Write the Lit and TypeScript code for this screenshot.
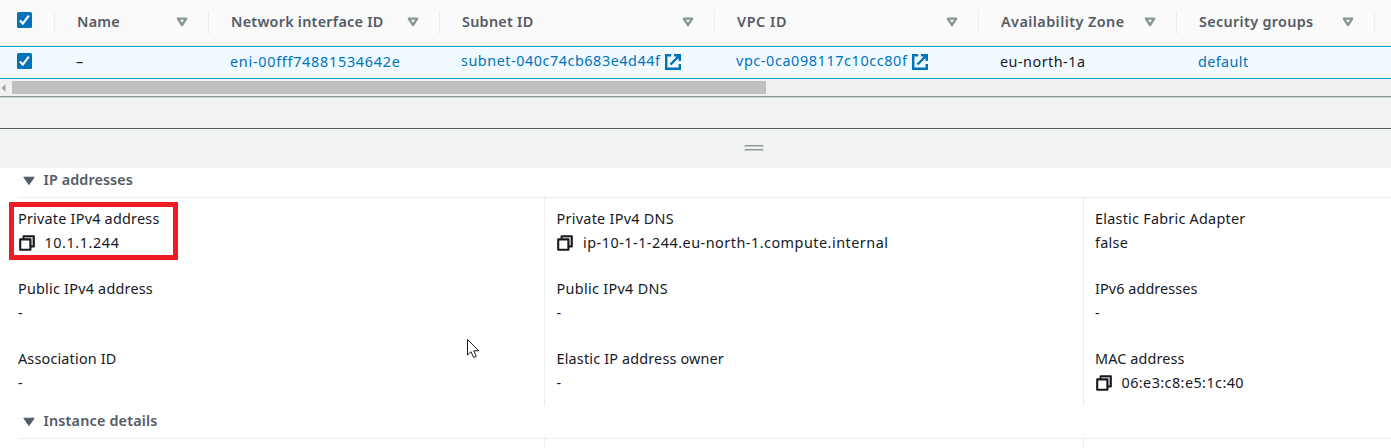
import { LitElement, html, css, nothing } from "lit";
import { customElement, property } from "lit/decorators.js";

/** One line of text tracked out to a fixed measure. */
@customElement("set-text")
class SetText extends LitElement {
  @property() text = "";
  @property({ type: Number }) measure = 0;
  static styles = css`
    :host { display: block; white-space: nowrap; flex: none; }
    .line { display: inline-block; }
  `;
  render() {
    return html`<span class="line">${this.text}</span>`;
  }
  updated() {
    const line = this.renderRoot.querySelector(".line") as HTMLElement;
    line.style.letterSpacing = "0px";
    const natural = line.getBoundingClientRect().width;
    if (this.measure && this.text.length > 1) {
      line.style.letterSpacing = `${(this.measure - natural) / this.text.length}px`;
    }
  }
}

type Item = { label: string; lw: number; value: string; vw: number; copy?: boolean; marked?: boolean };

const columns = [
  { title: "Name", w: 43, width: 154, value: "–", vw: 0 },
  { title: "Network interface ID", w: 152.5, width: 231, value: "eni-00fff74881534642e", vw: 170.5, link: true },
  { title: "Subnet ID", w: 71.5, width: 275, value: "subnet-040c74cb683e4d44f", vw: 199.5, link: true, external: true },
  { title: "VPC ID", w: 50, width: 264, value: "vpc-0ca098117c10cc80f", vw: 171.5, link: true, external: true },
  { title: "Availability Zone", w: 123.5, width: 198, value: "eu-north-1a", vw: 85.5 },
  { title: "Security groups", w: 114.5, width: 198, value: "default", vw: 50.5, link: true },
];

const groups: Item[][] = [
  [
    { label: "Private IPv4 address", lw: 141.5, value: "10.1.1.244", vw: 75, copy: true, marked: true },
    { label: "Public IPv4 address", lw: 135, value: "-", vw: 0 },
    { label: "Association ID", lw: 98.5, value: "-", vw: 0 },
  ],
  [
    { label: "Private IPv4 DNS", lw: 117.5, value: "ip-10-1-1-244.eu-north-1.compute.internal", vw: 305.5, copy: true },
    { label: "Public IPv4 DNS", lw: 111.5, value: "-", vw: 0 },
    { label: "Elastic IP address owner", lw: 167.5, value: "-", vw: 0 },
  ],
  [
    { label: "Elastic Fabric Adapter", lw: 150.5, value: "false", vw: 33 },
    { label: "IPv6 addresses", lw: 102.5, value: "-", vw: 0 },
    { label: "MAC address", lw: 89.5, value: "06:e3:c8:e5:1c:40", vw: 122.5, copy: true },
  ],
];

const check = html`<svg class="check" width="15" height="16" viewBox="0 0 15 16">
  <rect width="15" height="16" rx="1.5" fill="#0073bb" />
  <path d="M2.9 8.6 5.8 11.6 11.8 3.6" fill="none" stroke="#fff" stroke-width="2.2" />
</svg>`;
const sort = html`<svg class="sort" width="12" height="10" viewBox="0 0 12 10">
  <path d="M1.8 1.6H10.2L6 8Z" fill="none" stroke="#879596" stroke-width="2.3" stroke-linejoin="round" />
</svg>`;
const external = html`<svg class="external" width="16" height="16" viewBox="0 0 16 16" fill="none" stroke="#0073bb" stroke-width="2.4">
  <path d="M6.2 1.2H1.2V14.8H14.8V10M9 1.2H14.8V7M14.6 1.4 5.5 10.5" />
</svg>`;
const copy = html`<svg class="copy" width="16" height="16" viewBox="0 0 16 16" fill="none" stroke="#16191f" stroke-width="2.1" stroke-linejoin="round">
  <path d="M4.6 4V1.2H14.8V11.4H12" /><path d="M5.5 2.7H13.3V10.5" stroke="#a2a3a5" stroke-width="1" /><rect x="1.2" y="4.4" width="10.2" height="10.4" />
</svg>`;
const caret = html`<svg class="caret" width="12" height="10" viewBox="0 0 12 10">
  <path d="M.8 1.2H11.2L6 8.6Z" fill="#545b64" stroke="#545b64" stroke-width="1" stroke-linejoin="round" />
</svg>`;

@customElement("app-root")
class AppRoot extends LitElement {
  static styles = css`
    :host {
      display: block; position: relative; width: 1391px; height: 448px; overflow: hidden;
      background: #fff; color: #16191f;
      font: 14.4px/24px "Noto Sans", sans-serif;
    }
    svg { display: block; flex: none; }
    .row { display: flex; box-sizing: border-box; }
    .head { height: 46px; background: #fafafa; border-bottom: 1px solid #eaeded; color: #545b64; font-weight: 600; padding-top: 11px; }
    .body { height: 33px; background: #f1faff; border: solid #00a1c9; border-width: 1px 0; }
    .pick { width: 55px; box-sizing: border-box; flex: none; padding-left: 17px; }
    .head .pick { border-right: 1px solid #eaeded; height: 23px; padding-top: 1px; }
    .body .pick { padding-top: 6px; }
    .cell { box-sizing: border-box; flex: none; display: flex; padding-left: 21px; }
    .head .cell { height: 23px; border-right: 1px solid #eaeded; padding: 0 20.5px 0 22px; justify-content: space-between; line-height: 22px; }
    .sort { margin-top: 6px; }
    .body .cell { padding-top: 3px; }
    .body .cell.ext { padding-top: 2px; }
    .link { color: #0073bb; }
    .external { margin: 5px 0 0 4.5px; }
    .scroll { height: 17px; background: #f1f1f1; display: flex; padding-top: 2px; box-sizing: border-box; }
    .scroll svg { margin: 3px 6px 0 1px; }
    .thumb { width: 754px; height: 13px; background: #c1c1c1; }
    .gap { height: 33px; box-sizing: border-box; background: #f2f3f3; border-top: 1px solid #879596; border-bottom: 1px solid #545b64; box-shadow: inset 0 1px #cfd4d4; }
    .grip { height: 39px; background: #f2f3f3; display: flex; justify-content: center; padding: 16px 0 0 117px; box-sizing: border-box; }
    .title { height: 30px; margin-left: 18px; box-sizing: border-box; border-bottom: 1px solid #eaeded; display: flex; color: #545b64; font-weight: 600; padding-left: 5px; }
    .title .caret { margin: 8px 8.5px 0 0; }
    .grid { display: grid; grid-template-columns: 527px 539px 1fr; margin-left: 18px; height: 210px; margin-top: -2px; }
    .title.next { margin-top: 3px; }
    .group { border-right: 1px solid #eaeded; box-sizing: border-box; height: 210px; padding: 11px 0 0 11.5px; }
    .group:first-child { padding-left: 0; }
    .group:last-child { border: 0; padding-left: 11px; }
    .item { height: 70px; position: relative; }
    .value { display: flex; }
    .copy { margin: 4px 10px 0 .5px; }
    .mark { position: absolute; left: -9px; top: -5px; width: 169px; height: 58px; box-sizing: border-box; border: 5px solid #ed1c24; }
    .pointer { position: absolute; left: 467px; top: 339px; }
  `;

  item(i: Item) {
    return html`<div class="item">
      <set-text text=${i.label} measure=${i.lw}></set-text>
      <div class="value">${i.copy ? copy : nothing}<set-text text=${i.value} measure=${i.vw}></set-text></div>
      ${i.marked ? html`<div class="mark"></div>` : nothing}
    </div>`;
  }

  title(text: string, measure: number, next = false) {
    return html`<div class="title ${next ? "next" : ""}">${caret}<set-text text=${text} measure=${measure}></set-text></div>`;
  }

  render() {
    return html`
      <div class="row head">
        <div class="pick">${check}</div>
        ${columns.map((c) => html`<div class="cell" style="width:${c.width}px"><set-text text=${c.title} measure=${c.w}></set-text>${sort}</div>`)}
      </div>
      <div class="row body">
        <div class="pick">${check}</div>
        ${columns.map((c) => html`<div class="cell ${c.external ? "ext" : ""}" style="width:${c.width}px">
          <set-text class=${c.link ? "link" : ""} text=${c.value} measure=${c.vw}></set-text>${c.external ? external : nothing}
        </div>`)}
      </div>
      <div class="scroll">
        <svg width="5" height="8" viewBox="0 0 5 8"><path d="M4.5 0V8L.5 4Z" fill="#a3a3a3" /></svg>
        <div class="thumb"></div>
      </div>
      <div class="gap"></div>
      <div class="grip"><svg width="20" height="6" viewBox="0 0 20 6">
        <path d="M1 .5H19M1 4.5H19" stroke="#919697" /><path d="M0 1.5H20M0 5.5H20" stroke="#c6c8c8" />
      </svg></div>
      ${this.title("IP addresses", 89.5)}
      <div class="grid">${groups.map((g) => html`<div class="group">${g.map((i) => this.item(i))}</div>`)}</div>
      ${this.title("Instance details", 114, true)}
      <div class="grid"><div class="group"></div><div class="group"></div><div class="group"></div></div>
      <svg class="pointer" width="13" height="20" viewBox="0 0 13 20">
        <path d="M.5 .5V16L4 12.7 6.6 18.5 9.2 17.3 6.8 11.8H11.8Z" fill="#fff" stroke="#16191f" />
      </svg>
    `;
  }
}
